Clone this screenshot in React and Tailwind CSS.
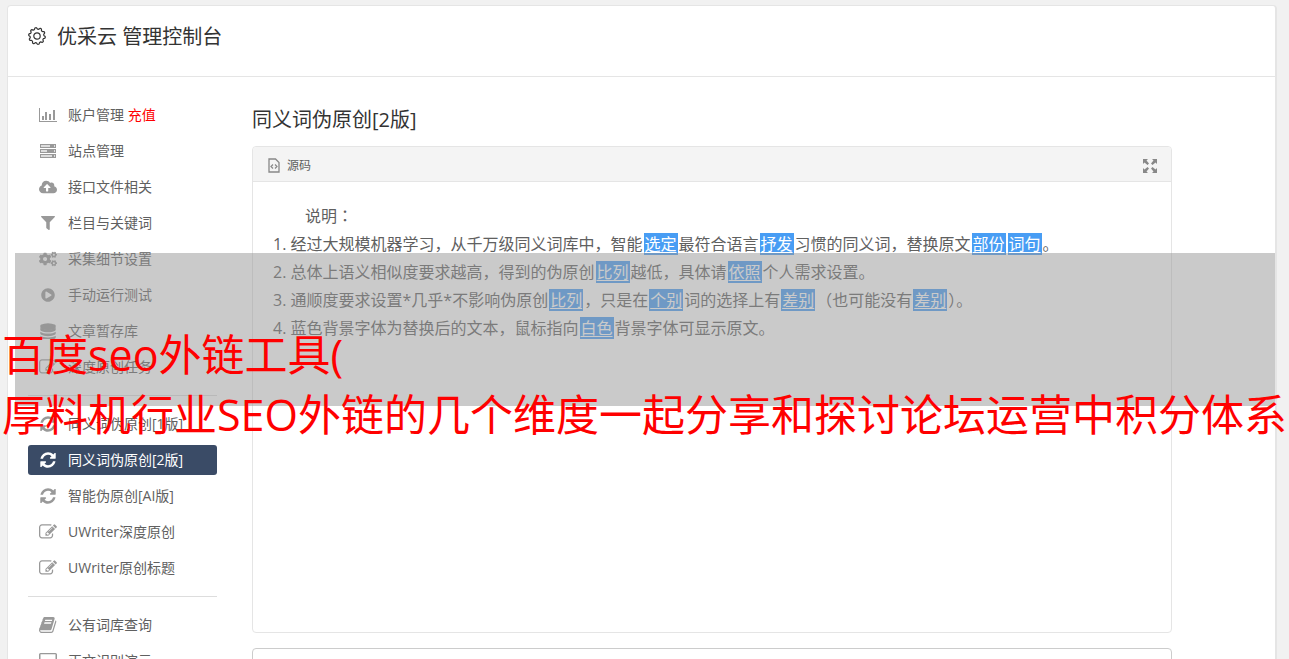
import { FaCloudUploadAlt, FaFilter, FaCogs, FaPlayCircle } from "react-icons/fa";

const svg = (viewBox, children) =>
  function Icon() {
    return (
      <svg viewBox={viewBox} width="18" height="16" fill="currentColor" aria-hidden="true">
        {children}
      </svg>
    );
  };

const BarChart = svg(
  "0 0 18 16",
  <path d="M0 1h1v13h17v1H0zM3 9h2v4H3zM6 5h2v8H6zM10 7h2v6h-2zM14 3h2v10h-2z" />
);

const Server = svg(
  "0 0 18 16",
  <>
    <path d="M1 1h16v4H1zM1 6h16v4H1zM1 11h16v4H1z" />
    <path d="M2 2h9v2H2zM15 2h1v2h-1zM2 7h6v2H2zM15 7h1v2h-1zM2 12h11v2H2zM15 12h1v2h-1z" fill="#ddd" />
  </>
);

const Cloud = () => <FaCloudUploadAlt size={18} />;
const Filter = () => <FaFilter size={14} />;
const Cogs = () => <FaCogs size={18} />;
const Play = () => <FaPlayCircle size={14} />;

const Database = svg(
  "0 0 1792 1536",
  <path
    transform="translate(128)"
    d="M768 640q237 0 443-43t325-127v170q0 69-103 128t-280 93.500-385 34.500-385-34.500T103 768 0 640V470q119 84 325 127t443 43zm0 768q237 0 443-43t325-127v170q0 69-103 128t-280 93.500-385 34.500-385-34.500T103 1536 0 1408v-170q119 84 325 127t443 43zm0-384q237 0 443-43t325-127v170q0 69-103 128t-280 93.500-385 34.500-385-34.500T103 1152 0 1024V854q119 84 325 127t443 43zM768 0q208 0 385 34.500T1433 128t103 128v128q0 69-103 128t-280 93.500T768 640t-385-34.500T103 512 0 384V256q0-69 103-128t280-93.500T768 0z"
  />
);

const Refresh = svg(
  "-128 0 1792 1536",
  <path d="M1511 928q0 5-1 7-64 268-268 434.500T764 1536q-146 0-282.500-55T238 1324l-129 129q-19 19-45 19t-45-19-19-45V960q0-26 19-45t45-19h448q26 0 45 19t19 45-19 45l-137 137q71 66 161 102t187 36q134 0 250-65t186-179q11-17 53-117 8-23 30-23h192q13 0 22.500 9.500t9.500 22.500zm25-800v448q0 26-19 45t-45 19h-448q-26 0-45-19t-19-45 19-45l138-138Q969 256 768 256q-134 0-250 65T332 500q-11 17-53 117-8 23-30 23H50q-13 0-22.500-9.500T18 608v-7q65-268 270-434.500T768 0q146 0 284 55.500T1297 212l130-129q19-19 45-19t45 19 19 45z" />
);

const Edit = svg(
  "0 0 1792 1536",
  <path d="M888 1056l116-116-152-152-116 116v56h96v96h56zm440-720q-16-16-33 1L945 687q-17 17-1 33t33-1l350-350q17-17 1-33zm80 594v190q0 119-84.500 203.500T1120 1408H288q-119 0-203.500-84.500T0 1120V288Q0 169 84.500 84.500T288 0h832q63 0 117 25 15 7 18 23 3 17-9 29l-49 49q-14 14-32 8-23-6-45-6H288q-66 0-113 47t-47 113v832q0 66 47 113t113 47h832q66 0 113-47t47-113V994q0-13 9-22l64-64q15-15 35-7t20 29zm-96-738l288 288-672 672H640V864zm444 132l-92 92-288-288 92-92q28-28 68-28t68 28l152 152q28 28 28 68t-28 68z" />
);

const Book = svg(
  "0 0 1728 1536",
  <path d="M1639 350q40 57 18 129l-275 906q-19 64-76.500 107.500T1183 1536H260q-77 0-148.500-53.500T12 1351q-24-67-2-127 0-4 3-27t4-37q1-8-3-21.500t-3-19.500q2-11 8-21t16.500-23.500T52 1051q23-38 45-91.500t30-91.500q3-10 .5-30t-.5-28q3-11 17-28t17-23q21-36 42-92t25-90q1-9-2.500-32t.500-28q4-13 22-30.500t22-22.500q19-26 42.500-84.500T340 283q1-8-3-25.500t-2-26.500q2-8 9-18t18-23 17-21q8-12 16.500-30.500t15-35 16-36 19.500-32T469.500 12t36-11.500T553 6l-1 3q38-9 51-9h761q74 0 114 56t18 130l-274 906q-36 119-71.500 153.500T1022 1280H153q-27 0-38 15-11 16-1 43 24 70 144 70h923q29 0 56-15.500t35-41.500l300-987q7-22 5-57 38 15 59 43zM575 352q-4 13 2 22.500t20 9.500h608q13 0 25.500-9.500T1247 352l21-64q4-13-2-22.500t-20-9.500H638q-13 0-25.500 9.500T596 288zm-83 256q-4 13 2 22.500t20 9.500h608q13 0 25.500-9.500T1164 608l21-64q4-13-2-22.500t-20-9.500H555q-13 0-25.500 9.500T513 544z" />
);

const Laptop = svg(
  "0 0 18 16",
  <path fillRule="evenodd" d="M1.500 0h15Q18 0 18 1.500V13H0V1.500Q0 0 1.500 0zM1.500 1.300v10.500h15V1.300z" />
);

// Gear outline: a circle whose radius swings between root and tip ten times.
const gearPath =
  Array.from({ length: 120 }, (_, i) => {
    const a = (i / 120) * Math.PI * 2;
    const wave = Math.max(-0.7, Math.min(0.7, Math.sin(a * 10))) / 0.7;
    const r = 7.6 + 0.75 * wave;
    return `${i ? "L" : "M"}${(9 + r * Math.cos(a)).toFixed(2)} ${(9 + r * Math.sin(a)).toFixed(2)}`;
  }).join("") + "Z";

const Gear = () => (
  <svg viewBox="0 0 18 18" width="18" height="18" fill="none" stroke="currentColor" strokeWidth="1.200" aria-hidden="true">
    <path d={gearPath} strokeLinejoin="round" />
    <circle cx="9" cy="9" r="3.200" />
  </svg>
);

const FileCode = () => (
  <svg viewBox="0 0 12 15" width="12" height="15" fill="none" stroke="currentColor" aria-hidden="true">
    <path d="M1 1h6.500L11 4.500V14H1z" strokeWidth="1.300" />
    <path d="M5 6.500L3 8.500l2 2M7 6.500l2 2-2 2" strokeWidth="1.200" />
  </svg>
);

const Expand = () => (
  <svg viewBox="0 0 14 14" width="14" height="14" fill="currentColor" aria-hidden="true">
    <path d="M0 0h5L3.500 1.500 6 4.500 4.500 6l-3-2.500L0 5zM14 0v5l-1.500-1.500-3 2.500L8 4.500l2.500-3L9 0zM0 14V9l1.500 1.500 3-2.500L6 9.500l-2.500 3L5 14zM14 14H9l1.500-1.500-2.500-3L9.500 8l3 2.500L14 9z" />
  </svg>
);

const groups = [
  [
    { icon: BarChart, label: "账户管理", extra: "充值" },
    { icon: Server, label: "站点管理" },
    { icon: Cloud, label: "接口文件相关" },
    { icon: Filter, label: "栏目与关键词" },
    { icon: Cogs, label: "采集细节设置" },
    { icon: Play, label: "手动运行测试" },
    { icon: Database, label: "文章暂存库" },
    { icon: Edit, label: "深度原创任务" },
  ],
  [
    { icon: Refresh, label: "同义词伪原创[1版]" },
    { icon: Refresh, label: "同义词伪原创[2版]", active: true },
    { icon: Refresh, label: "智能伪原创[AI版]" },
    { icon: Edit, label: "UWriter深度原创" },
    { icon: Edit, label: "UWriter原创标题" },
  ],
  [
    { icon: Book, label: "公有词库查询" },
    { icon: Laptop, label: "正文识别演示" },
  ],
];

function NavItem({ icon: Icon, label, extra, active }) {
  return (
    <li>
      <a
        href="#"
        className={
          active
            ? "flex h-[30px] items-center rounded-[3px] bg-[#3a4b66] px-2.5 text-white"
            : "flex h-[30px] items-center rounded-[3px] px-2.5 text-[#606060]"
        }
      >
        <span className={active ? "flex w-5 justify-center" : "flex w-5 justify-center text-[#999]"}>
          <Icon />
        </span>
        <span className="ml-2.5 whitespace-nowrap">
          {label}
          {extra && <span className="text-[#f00]"> {extra}</span>}
        </span>
      </a>
    </li>
  );
}

function Swap({ children }) {
  return (
    <span className="mx-px border-x border-[#489df4] bg-[#489df4] text-white underline underline-offset-2">
      {children}
    </span>
  );
}

export default function App() {
  return (
    <div className="relative h-screen overflow-hidden bg-[#f1f1f1] pt-[5px] pr-3 pl-[7px] font-['Open_Sans','Noto_Sans_CJK_SC',sans-serif] text-[#606060]">
      <div className="min-h-full rounded-t border border-r-2 border-[#e5e5e5] bg-white">
        <header className="flex h-[71px] items-start border-b border-[#e5e5e5] px-5 pt-4 text-[#333]">
          <span className="mt-[5px]">
            <Gear />
          </span>
          <h1 className="ml-[11px] text-[20px] leading-[30px]">优采云 管理控制台</h1>
        </header>
        <div className="flex px-5">
          <nav className="w-[189px] shrink-0 pt-[23px] text-[14px] leading-5">
            {groups.map((group, i) => (
              <ul
                key={i}
                className={i ? "mt-[13px] flex flex-col gap-1.5 border-t border-[#ddd] pt-[13px]" : "flex flex-col gap-1.5"}
              >
                {group.map((item) => (
                  <NavItem key={item.label} {...item} />
                ))}
              </ul>
            ))}
          </nav>
          <main className="mr-[83px] ml-[35px] min-w-0 flex-1 pt-7">
            <h2 className="text-[20px] leading-[30px] text-[#333]">同义词伪原创[2版]</h2>
            <section className="mt-[11px] h-[487px] rounded border border-[#e5e5e5]">
              <div className="flex h-[35px] items-center justify-between rounded-t border-b border-[#e5e5e5] bg-[#f4f4f4] pt-[3px] pr-3.5 pl-[15px] text-[12px]">
                <span className="flex items-center gap-[7px]">
                  <span className="text-[#888]">
                    <FileCode />
                  </span>
                  源码
                </span>
                <button type="button" aria-label="全屏" className="text-[#888]">
                  <Expand />
                </button>
              </div>
              <div className="px-5 pt-[19px] text-[16px] leading-7">
                <p className="pl-8">
                  说明<span className="font-['Noto_Sans_CJK_TC',sans-serif]" lang="zh-TW">：</span>
                </p>
                <p>1. 经过大规模机器学习，从千万级同义词库中，智能<Swap>选定</Swap>最符合语言<Swap>抒发</Swap>习惯的同义词，替换原文<Swap>部份</Swap><Swap>词句</Swap>。</p>
                <p>2. 总体上语义相似度要求越高，得到的伪原创<Swap>比列</Swap>越低，具体请<Swap>依照</Swap>个人需求设置。</p>
                <p>3. 通顺度要求设置*几乎*不影响伪原创<Swap>比列</Swap>，只是在<Swap>个别</Swap>词的选择上有<Swap>差别</Swap>（也可能没有<Swap>差别</Swap>）。</p>
                <p>4. 蓝色背景字体为替换后的文本，鼠标指向<Swap>白色</Swap>背景字体可显示原文。</p>
              </div>
            </section>
            <textarea aria-label="原文" className="mt-[15px] block h-40 w-full resize-none rounded border border-[#ccc] bg-white p-3" />
          </main>
        </div>
      </div>
      <div className="absolute top-[253px] right-3.5 left-[15px] h-[153px] bg-[#969696]/50" />
      <div className="absolute top-[325px] left-0.5 text-[43px] leading-[60px] whitespace-nowrap text-[#f00]">
        <p>百度seo外链工具(</p>
        <p>厚料机行业SEO外链的几个维度一起分享和探讨论坛运营中积分体系</p>
      </div>
    </div>
  );
}
